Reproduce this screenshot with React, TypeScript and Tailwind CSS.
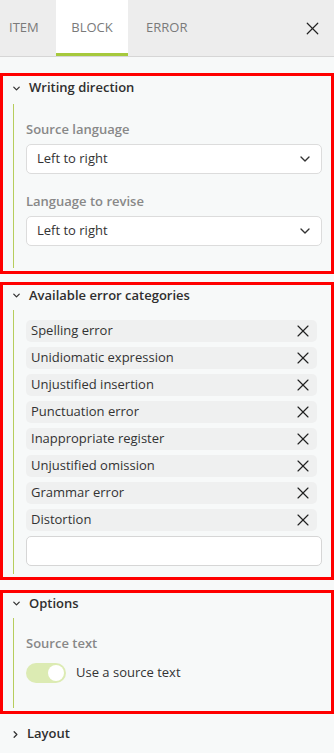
import { ChevronDown, ChevronRight, X } from "lucide-react";

const categories = [
  "Spelling error",
  "Unidiomatic expression",
  "Unjustified insertion",
  "Punctuation error",
  "Inappropriate register",
  "Unjustified omission",
  "Grammar error",
  "Distortion",
];

function Section(props: { title: string; children: React.ReactNode; className?: string; head?: string }) {
  return (
    <div className={"border-[3px] border-[#ff0000] " + (props.className ?? "")}>
      <div className={"flex items-center pl-[8px] " + (props.head ?? "h-[21px]")}>
        <ChevronDown size={11} strokeWidth={2.75} className="text-[#333]" />
        <span className="ml-[7px] text-[13px] font-semibold text-[#2f2f2f]">{props.title}</span>
      </div>
      <div className="ml-[10px] mt-[4px] mb-[3px] border-l border-[#b7cd5c] pl-[12px] pr-[9px]">
        {props.children}
      </div>
    </div>
  );
}

function Select(props: { value: string }) {
  return (
    <div className="flex items-center justify-between h-[30px] bg-white border border-[#dcdcdc] rounded-[5px] pl-[10px] pr-[8px]">
      <span className="text-[13px] text-[#333]">{props.value}</span>
      <ChevronDown size={16} strokeWidth={2} className="text-[#333]" />
    </div>
  );
}

export default function App() {
  return (
    <div className="w-[334px] h-[753px] bg-[#f7f9f9] overflow-hidden" style={{ fontFamily: '"Open Sans", "Noto Sans", sans-serif' }}>
      {/* tabs */}
      <div className="flex items-stretch h-[57px] bg-[#ededed] border-b border-[#d6d6d6]">
        <div className="w-[56px] flex items-center pl-[9px] text-[13px] text-[#7a7a7a]">ITEM</div>
        <div className="w-[72px] flex items-center justify-center bg-white border-b-[3px] border-[#a6c93c] pt-[3px] text-[13px] text-[#7a7a7a]">BLOCK</div>
        <div className="flex items-center pl-[18px] text-[13px] text-[#7a7a7a]">ERROR</div>
        <div className="ml-auto flex items-center pr-[11px]">
          <X size={21} strokeWidth={1.4} className="text-[#222]" />
        </div>
      </div>

      <div className="pt-[16px] flex flex-col">
        <Section title="Writing direction" head="h-[24px]">
          <div className="pt-[16px] pb-[22px]">
            <div className="text-[13px] font-semibold text-[#888] leading-[18px]">Source language</div>
            <div className="mt-[6px]"><Select value="Left to right" /></div>
            <div className="mt-[18px] text-[13px] font-semibold text-[#888] leading-[18px]">Language to revise</div>
            <div className="mt-[6px]"><Select value="Left to right" /></div>
          </div>
        </Section>

        <Section title="Available error categories" className="mt-[8px]">
          <div className="pt-[10px] pb-[8px] flex flex-col gap-[5px]">
            {categories.map((c) => (
              <div key={c} className="flex items-center justify-between h-[22px] bg-[#eff0f0] rounded-[5px] pl-[5px] pr-[4px] mr-[5px]">
                <span className="text-[13px] text-[#333]">{c}</span>
                <X size={20} strokeWidth={1.4} className="text-[#222]" />
              </div>
            ))}
            <div className="h-[30px] bg-white border border-[#d6d6d6] rounded-[5px]" />
          </div>
        </Section>

        <Section title="Options" className="mt-[10px]">
          <div className="pt-[16px] pb-[25px]">
            <div className="text-[13px] font-semibold text-[#888] leading-[18px]">Source text</div>
            <div className="mt-[11px] flex items-center">
              <div className="w-[40px] h-[20px] rounded-full bg-[#dcebb3] flex items-center justify-end pr-[2px]">
                <div className="w-[16px] h-[16px] rounded-full bg-white" />
              </div>
              <span className="ml-[10px] text-[13px] text-[#333]">Use a source text</span>
            </div>
          </div>
        </Section>

        <div className="flex items-center h-[24px] mt-[8px] pl-[10px]">
          <ChevronRight size={11} strokeWidth={2.75} className="text-[#333]" />
          <span className="ml-[6px] text-[13px] font-semibold text-[#2f2f2f]">Layout</span>
        </div>
      </div>
    </div>
  );
}
